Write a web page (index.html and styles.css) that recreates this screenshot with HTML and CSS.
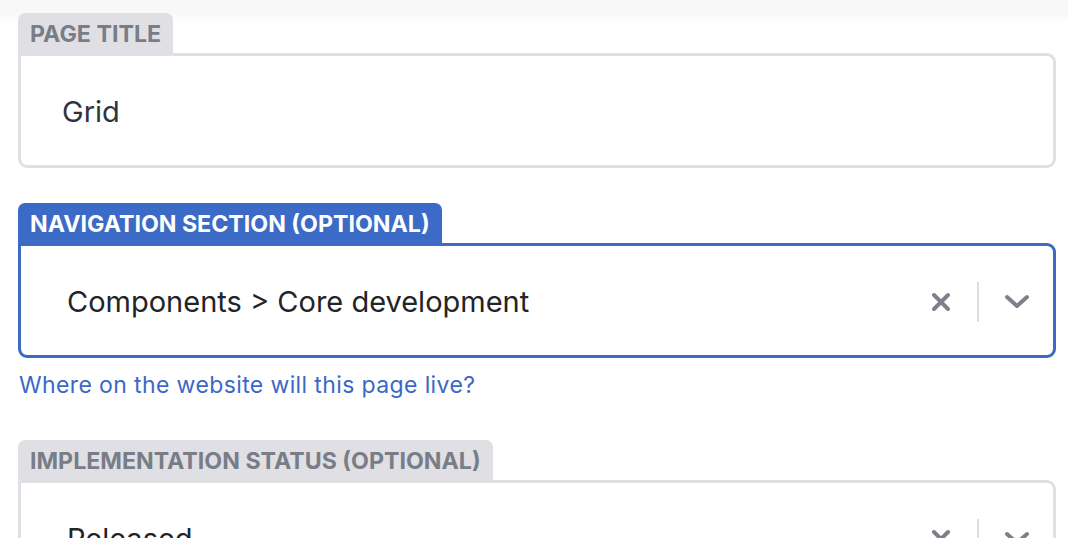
FILE: index.html
```html
<!DOCTYPE html>
<html>
<head>
<meta charset="utf-8">
<link rel="stylesheet" href="styles.css">
</head>
<body>
<div class="topshade"></div>
<main class="form">
  <div class="field">
    <div class="tab">PAGE TITLE</div>
    <div class="box">
      <span class="value text-input">Grid</span>
    </div>
  </div>

  <div class="field focused">
    <div class="tab">NAVIGATION SECTION (OPTIONAL)</div>
    <div class="box select">
      <span class="value">Components &gt; Core development</span>
      <div class="controls">
        <svg class="icon-x" width="20" height="20" viewBox="0 0 20 20"><path d="M3 3 L17 17 M17 3 L3 17" stroke="#7b808b" stroke-width="4" stroke-linecap="round"/></svg>
        <span class="sep"></span>
        <svg class="icon-chev" width="26" height="16" viewBox="0 0 26 16"><path d="M3 3 L13 12 L23 3" fill="none" stroke="#7b808b" stroke-width="4" stroke-linecap="round" stroke-linejoin="round"/></svg>
      </div>
    </div>
    <p class="help">Where on the website will this page live?</p>
  </div>

  <div class="field">
    <div class="tab">IMPLEMENTATION STATUS (OPTIONAL)</div>
    <div class="box select">
      <span class="value">Released</span>
      <div class="controls">
        <svg class="icon-x" width="20" height="20" viewBox="0 0 20 20"><path d="M3 3 L17 17 M17 3 L3 17" stroke="#7b808b" stroke-width="4" stroke-linecap="round"/></svg>
        <span class="sep"></span>
        <svg class="icon-chev" width="26" height="16" viewBox="0 0 26 16"><path d="M3 3 L13 12 L23 3" fill="none" stroke="#7b808b" stroke-width="4" stroke-linecap="round" stroke-linejoin="round"/></svg>
      </div>
    </div>
  </div>
</main>
</body>
</html>
```
FILE: styles.css
```css
html, body {
  margin: 0;
  padding: 0;
  background: #ffffff;
  overflow: hidden;
}
body {
  font-family: Inter, "Noto Sans", sans-serif;
  width: 1068px;
  height: 538px;
  position: relative;
}
.topshade {
  position: absolute;
  left: 0;
  top: 0;
  width: 100%;
  height: 22px;
  background: linear-gradient(#f8f8f8, #f8f8f8 60%, #ffffff);
}
.form {
  position: relative;
  padding: 13px 12px 0 18px;
  display: flex;
  flex-direction: column;
  gap: 35px;
}
.field {
  display: flex;
  flex-direction: column;
  align-items: flex-start;
}
.tab {
  height: 40px;
  box-sizing: border-box;
  padding: 3px 12px 0 12px;
  background: #e0e0e4;
  color: #787d88;
  font-weight: 700;
  font-size: 23.2px;
  line-height: 37px;
  border-radius: 7px 7px 0 0;
  white-space: nowrap;
}
.box {
  align-self: stretch;
  box-sizing: border-box;
  height: 115px;
  border: 3px solid #e0e0e4;
  border-radius: 0 9px 9px 9px;
  display: flex;
  align-items: center;
  padding-top: 2px;
  padding-left: 41px;
  padding-right: 23px;
}
.value {
  font-size: 29px;
  color: #2e3440;
  flex: 1;
}
.select {
  padding-left: 46px;
}
.select .value {
  color: #222426;
}
.controls {
  display: flex;
  align-items: center;
  height: 40px;
}
.icon-x {
  display: block;
  margin-right: 26px;
}
.sep {
  display: block;
  width: 2px;
  height: 40px;
  background: #dedee2;
  margin-right: 25px;
}
.icon-chev {
  display: block;
}
.focused .tab {
  background: #3c6ac7;
  color: #ffffff;
}
.focused .box {
  border-color: #3c6ac7;
}
.help {
  margin: 13px 0 6px 1px;
  font-size: 23px;
  color: #3c68c5;
  letter-spacing: 0.38px;
  line-height: 28px;
}
```
